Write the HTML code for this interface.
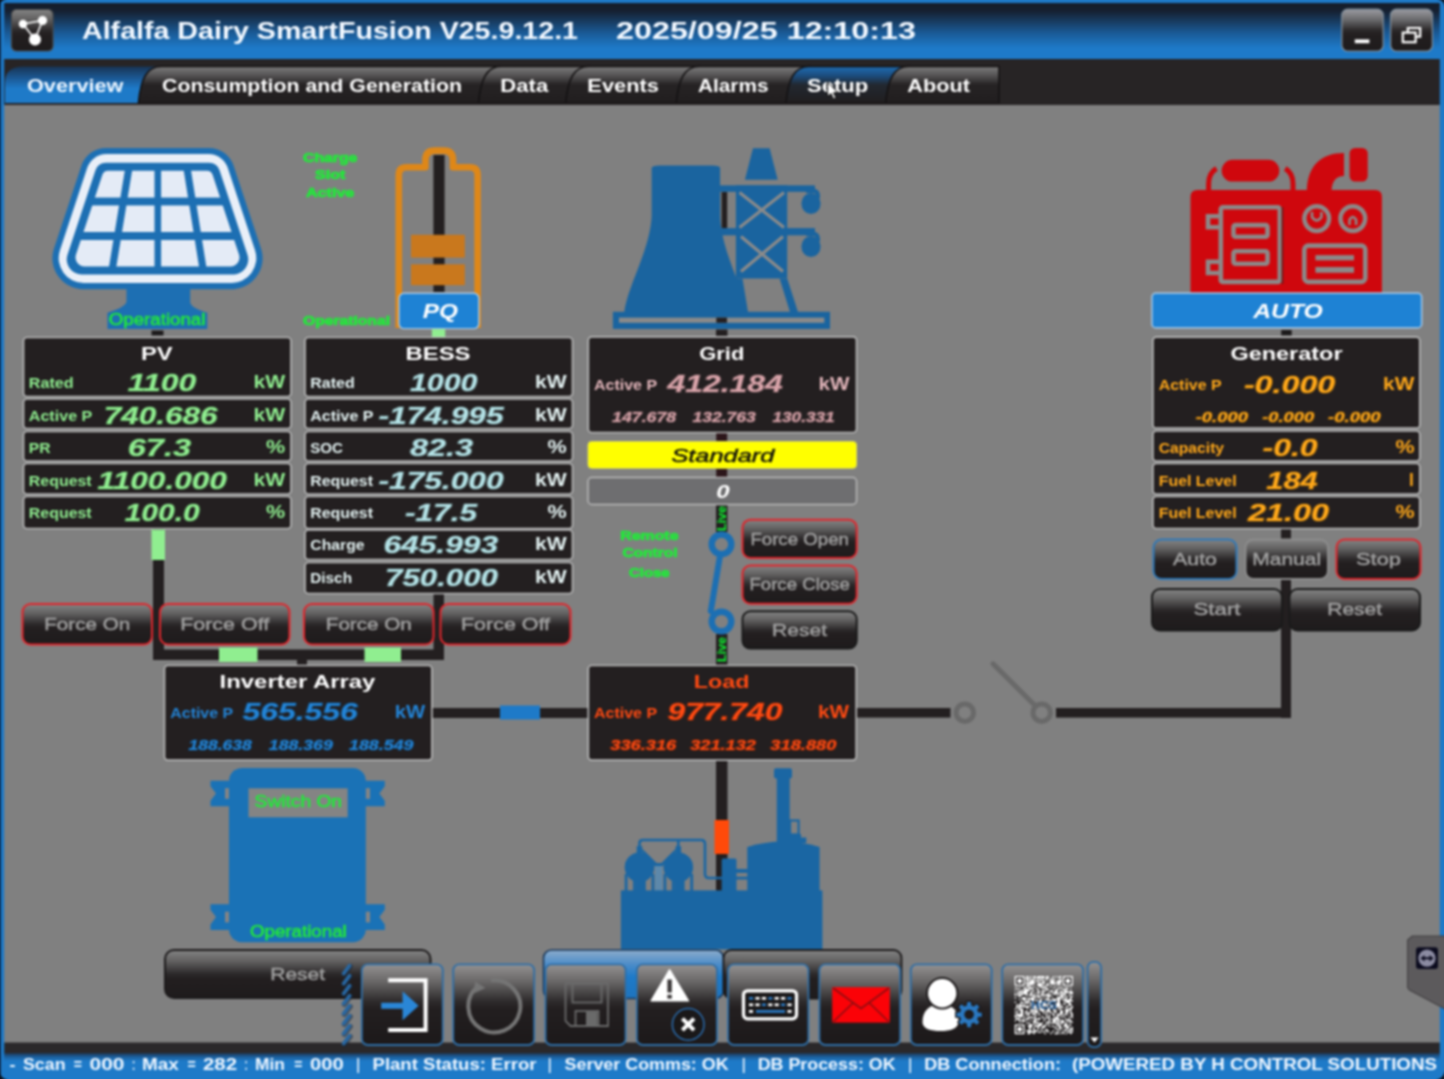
<!DOCTYPE html>
<html><head><meta charset="utf-8"><title>SmartFusion Overview</title>
<style>html,body{margin:0;padding:0;background:#808080;overflow:hidden;width:1444px;height:1079px}svg{display:block;font-family:"Liberation Sans",sans-serif}text{white-space:pre}</style></head>
<body>
<svg width="1444" height="1079" viewBox="0 0 1444 1079">
<defs>
<linearGradient id="titleg" x1="0" y1="0" x2="0" y2="1"><stop offset="0" stop-color="#141c28"/><stop offset="0.18" stop-color="#162030"/><stop offset="0.55" stop-color="#1a5a96"/><stop offset="0.8" stop-color="#1e7ac8"/><stop offset="1" stop-color="#1e7ac8"/></linearGradient>
<linearGradient id="btn" x1="0" y1="0" x2="0" y2="1"><stop offset="0" stop-color="#848484"/><stop offset="0.22" stop-color="#646363"/><stop offset="0.5" stop-color="#2c292a"/><stop offset="0.6" stop-color="#231f20"/><stop offset="1" stop-color="#1e1b1c"/></linearGradient>
<linearGradient id="wbtn" x1="0" y1="0" x2="0" y2="1"><stop offset="0" stop-color="#9c9ca2"/><stop offset="0.25" stop-color="#6a6a6c"/><stop offset="0.5" stop-color="#2c292a"/><stop offset="0.6" stop-color="#231f20"/><stop offset="1" stop-color="#1e1b1c"/></linearGradient>
<linearGradient id="tabg" x1="0" y1="0" x2="0" y2="1"><stop offset="0" stop-color="#7c7c7c"/><stop offset="0.25" stop-color="#545253"/><stop offset="0.5" stop-color="#262324"/><stop offset="1" stop-color="#211e1f"/></linearGradient>
<linearGradient id="tabact" x1="0" y1="0" x2="0" y2="1"><stop offset="0" stop-color="#183454"/><stop offset="0.35" stop-color="#1c5c9a"/><stop offset="0.6" stop-color="#1e7ac8"/><stop offset="1" stop-color="#1e7ac8"/></linearGradient>
<linearGradient id="tabhov" x1="0" y1="0" x2="0" y2="1"><stop offset="0" stop-color="#1f6cb2"/><stop offset="0.25" stop-color="#1c4d7e"/><stop offset="0.5" stop-color="#222830"/><stop offset="1" stop-color="#211e1f"/></linearGradient>
<clipPath id="cellclip"><path d="M96.58,170.76 A10,10 0 0 1 106.08,163.90 L208.92,163.90 A10,10 0 0 1 218.42,170.76 L246.25,254.80 A14,14 0 0 1 232.96,273.20 L82.04,273.20 A14,14 0 0 1 68.75,254.80 Z"/></clipPath>
<linearGradient id="btnblue" x1="0" y1="0" x2="0" y2="1"><stop offset="0" stop-color="#8caccc"/><stop offset="0.3" stop-color="#4c8cc8"/><stop offset="0.55" stop-color="#1e7ac8"/><stop offset="1" stop-color="#1e74be"/></linearGradient>
<linearGradient id="tbtn" x1="0" y1="0" x2="0" y2="1"><stop offset="0" stop-color="#949292"/><stop offset="0.2" stop-color="#6c6a6a"/><stop offset="0.46" stop-color="#2e2b2c"/><stop offset="0.55" stop-color="#231f20"/><stop offset="1" stop-color="#1c191a"/></linearGradient>
<linearGradient id="sbg" x1="0" y1="0" x2="0" y2="1"><stop offset="0" stop-color="#20344c"/><stop offset="0.45" stop-color="#1c5c98"/><stop offset="1" stop-color="#1e7ac8"/></linearGradient>
<filter id="soft" color-interpolation-filters="sRGB" filterUnits="userSpaceOnUse" x="-30" y="-30" width="1504" height="1139"><feGaussianBlur stdDeviation="0.8"/></filter>
</defs>
<g filter="url(#soft)">
<rect x="-20.0" y="-20.0" width="1484.0" height="1119.0" fill="#808080" />
<rect x="-20.0" y="0.0" width="1484.0" height="60.0" fill="url(#titleg)" />
<rect x="-20.0" y="-20.0" width="1484.0" height="23.0" fill="#1e7ac8" />
<rect x="-20.0" y="59.0" width="1484.0" height="45.8" fill="#272425" />
<rect x="11.5" y="9.5" width="41.5" height="41.5" fill="url(#btn)" stroke="#4a4a4a" stroke-width="1.2" rx="5" ry="5" />
<g stroke="#fff" stroke-width="1.6" fill="#fff"><line x1="23" y1="24" x2="42.5" y2="20.5"/><line x1="23" y1="24" x2="35" y2="39.5"/><line x1="42.5" y1="20.5" x2="35" y2="39.5"/><circle cx="23" cy="24" r="3.4"/><circle cx="42.5" cy="20.5" r="3.8"/><circle cx="35" cy="39.5" r="5.2"/></g>
<text x="82.0" y="39.4" font-size="23.18" textLength="496.0" lengthAdjust="spacingAndGlyphs" fill="#f2f8ff" font-weight="bold" >Alfalfa Dairy SmartFusion V25.9.12.1</text>
<text x="616.0" y="39.4" font-size="23.18" textLength="300.0" lengthAdjust="spacingAndGlyphs" fill="#f2f8ff" font-weight="bold" >2025/09/25 12:10:13</text>
<rect x="1341.8" y="9.2" width="41.4" height="42.0" fill="url(#wbtn)" stroke="#7f8d9a" stroke-width="1.3" rx="6" ry="6" />
<rect x="1390.6" y="9.2" width="41.8" height="42.0" fill="url(#wbtn)" stroke="#7f8d9a" stroke-width="1.3" rx="6" ry="6" />
<rect x="1354.8" y="39.4" width="14.6" height="3.8" fill="#fff" />
<g fill="none" stroke="#fff" stroke-width="2.2"><rect x="1402.8" y="32.6" width="12.8" height="9.6"/><path d="M1407.8 32.6 V28 H1420.2 V36.6 H1415.6"/></g>
<path d="M5,103 L5,82 Q5,66.5 24,66.5 L170,66.5 L170,103 Z" fill="url(#tabact)"/>
<path d="M138.4,103 C140.9,79 146.4,66.5 161.4,66.5 L500,66.5 L500,103 Z" fill="url(#tabg)" stroke="#141213" stroke-width="1.6"/>
<path d="M478.4,103 C480.9,79 486.4,66.5 501.4,66.5 L590,66.5 L590,103 Z" fill="url(#tabg)" stroke="#141213" stroke-width="1.6"/>
<path d="M565.6,103 C568.1,79 573.6,66.5 588.6,66.5 L700,66.5 L700,103 Z" fill="url(#tabg)" stroke="#141213" stroke-width="1.6"/>
<path d="M676.2,103 C678.7,79 684.2,66.5 699.2,66.5 L810,66.5 L810,103 Z" fill="url(#tabg)" stroke="#141213" stroke-width="1.6"/>
<path d="M785.9,103 C788.4,79 793.9,66.5 808.9,66.5 L910,66.5 L910,103 Z" fill="url(#tabhov)" stroke="#141213" stroke-width="1.6"/>
<path d="M885.6,103 C888.1,79 893.6,66.5 908.6,66.5 L999,66.5 L999,103 Z" fill="url(#tabg)" stroke="#141213" stroke-width="1.6"/>
<rect x="-20.0" y="103.2" width="1484.0" height="1.6" fill="#272425" />
<text x="27.0" y="91.7" font-size="17.60" textLength="96.4" lengthAdjust="spacingAndGlyphs" fill="#eef6ff" font-weight="bold" >Overview</text>
<text x="162.0" y="91.7" font-size="17.60" textLength="300.0" lengthAdjust="spacingAndGlyphs" fill="#fff" font-weight="bold" >Consumption and Generation</text>
<text x="500.3" y="91.7" font-size="17.60" textLength="47.9" lengthAdjust="spacingAndGlyphs" fill="#fff" font-weight="bold" >Data</text>
<text x="587.3" y="91.7" font-size="17.60" textLength="71.7" lengthAdjust="spacingAndGlyphs" fill="#fff" font-weight="bold" >Events</text>
<text x="698.0" y="91.7" font-size="17.60" textLength="70.5" lengthAdjust="spacingAndGlyphs" fill="#fff" font-weight="bold" >Alarms</text>
<text x="807.0" y="91.7" font-size="17.60" textLength="61.2" lengthAdjust="spacingAndGlyphs" fill="#fff" font-weight="bold" >Setup</text>
<text x="907.3" y="91.7" font-size="17.60" textLength="62.7" lengthAdjust="spacingAndGlyphs" fill="#fff" font-weight="bold" >About</text>
<path d="M827.5,82 L827.5,96.5 L831,93.5 L833.5,99 L836,98 L833.5,92.8 L838,92.5 Z" fill="#fff" stroke="#111" stroke-width="1"/>
<rect x="721.6" y="192.0" width="5.6" height="37.0" fill="#231f20" />
<path d="M753,148.3 L769.6,148.3 L777.7,179.7 L744.9,179.7 Z" fill="#1a649f"/>
<rect x="720.0" y="185.4" width="95.0" height="6.4" fill="#1a649f" />
<rect x="720.0" y="228.1" width="95.0" height="7.2" fill="#1a649f" />
<rect x="735.9" y="185.4" width="51.3" height="93.1" fill="#1a649f" />
<g stroke="#8a8a8a" stroke-width="3.2" stroke-linecap="butt"><line x1="739.5" y1="192.5" x2="784" y2="227.5"/><line x1="784" y1="192.5" x2="739.5" y2="227.5"/><line x1="741" y1="236.5" x2="783" y2="271.5"/><line x1="783" y1="236.5" x2="741" y2="271.5"/></g>
<path d="M779.6,278.5 L787.2,278.5 L798,312 L790,312 Z" fill="#1a649f"/>
<path d="M735.9,278.5 L742.5,278.5 L748,312 L738,312 Z" fill="#1a649f"/>
<path d="M806,191 L815,191 Q818,192 818,196 L818,198" fill="none" stroke="#1a649f" stroke-width="4"/>
<ellipse cx="811" cy="203.5" rx="9.6" ry="10.6" fill="#1a649f"/>
<ellipse cx="811" cy="246.5" rx="9.6" ry="10.6" fill="#1a649f"/>
<path d="M806,234 L815,234 Q818,235 818,239 L818,241" fill="none" stroke="#1a649f" stroke-width="4"/>
<path d="M651.7,168 Q651.7,165.6 660,165.4 L712,165.4 Q720.1,165.6 720.1,168 L720.1,216 C721,250 742,285 747.3,312 L624.3,312 C628,285 650,250 651.7,216 Z" fill="#1a649f"/>
<rect x="612.9" y="311.8" width="217.1" height="17.1" fill="#1a649f" />
<rect x="619.0" y="317.6" width="205.3" height="5.2" fill="#8a8a8a" />
<rect x="716.3" y="317.6" width="10.7" height="5.2" fill="#231f20" />
<rect x="153.0" y="529.0" width="11.0" height="131.0" fill="#231f20" />
<rect x="151.5" y="529.5" width="13.5" height="30.5" fill="#90ee90" />
<rect x="151.5" y="330.5" width="12.0" height="5.0" fill="#1c1a1b" />
<rect x="153.0" y="649.5" width="291.0" height="10.5" fill="#231f20" />
<rect x="219.0" y="647.5" width="38.5" height="14.5" fill="#90ee90" />
<rect x="364.5" y="647.5" width="36.5" height="14.5" fill="#90ee90" />
<rect x="433.5" y="594.0" width="10.5" height="66.0" fill="#231f20" />
<rect x="297.0" y="660.0" width="10.0" height="6.0" fill="#231f20" />
<rect x="432.0" y="708.0" width="156.0" height="10.0" fill="#231f20" />
<rect x="500.0" y="705.5" width="40.0" height="14.0" fill="#1e7ac8" />
<rect x="716.0" y="329.5" width="11.5" height="7.5" fill="#231f20" />
<rect x="716.2" y="432.5" width="11.0" height="9.5" fill="#2c161a" />
<rect x="716.2" y="468.0" width="11.0" height="10.0" fill="#2c161a" />
<rect x="716.0" y="504.0" width="11.5" height="28.0" fill="#231f20" />
<rect x="716.0" y="634.0" width="11.5" height="32.0" fill="#231f20" />
<rect x="716.0" y="760.0" width="11.5" height="132.0" fill="#231f20" />
<rect x="714.5" y="820.0" width="14.5" height="34.0" fill="#ff4a0a" />
<rect x="857.0" y="708.0" width="93.5" height="9.6" fill="#231f20" />
<rect x="1056.0" y="708.0" width="235.0" height="9.6" fill="#231f20" />
<rect x="1281.0" y="529.0" width="10.0" height="189.0" fill="#231f20" />
<rect x="1281.2" y="330.0" width="10.5" height="5.5" fill="#1c1a1b" />
<g fill="none" stroke="#696969" stroke-width="5"><circle cx="964.8" cy="712.7" r="8.7"/><circle cx="1041.7" cy="712.7" r="8.7"/></g>
<line x1="993" y1="663.8" x2="1035" y2="705.5" stroke="#696969" stroke-width="5" stroke-linecap="round"/>
<path d="M81.40,165.73 A26,26 0 0 1 106.08,147.90 L208.92,147.90 A26,26 0 0 1 233.60,165.73 L261.00,248.45 A31,31 0 0 1 231.58,289.20 L83.42,289.20 A31,31 0 0 1 54.00,248.45 Z" fill="#1d6fb3"/>
<path d="M87.24,167.81 A20,20 0 0 1 106.22,154.10 L208.78,154.10 A20,20 0 0 1 227.76,167.81 L255.03,250.14 A25,25 0 0 1 231.30,283.00 L83.70,283.00 A25,25 0 0 1 59.97,250.14 Z" fill="#e9eff8"/>
<path d="M95.49,170.24 A11,11 0 0 1 105.93,162.70 L209.07,162.70 A11,11 0 0 1 219.51,170.24 L247.48,254.68 A15,15 0 0 1 233.24,274.40 L81.76,274.40 A15,15 0 0 1 67.52,254.68 Z" fill="#1d6fb3"/>
<path d="M102.40,174.81 A6,6 0 0 1 108.10,170.70 L206.90,170.70 A6,6 0 0 1 212.60,174.81 L239.01,254.57 A9,9 0 0 1 230.47,266.40 L84.53,266.40 A9,9 0 0 1 75.99,254.57 Z" fill="#e4ebf6"/>
<g stroke="#1d6fb3" fill="none"><line x1="60" y1="201.5" x2="255" y2="201.5" stroke-width="7.6" clip-path="url(#cellclip)"/></g>
<g stroke="#1d6fb3" clip-path="url(#cellclip)"><line x1="60" y1="201.5" x2="255" y2="201.5" stroke-width="7.6"/><line x1="60" y1="236" x2="255" y2="236" stroke-width="8"/><line x1="157.8" y1="160" x2="157.8" y2="280" stroke-width="6.6"/><line x1="130.2" y1="160" x2="110.5" y2="280" stroke-width="7.2"/><line x1="185.7" y1="160" x2="204.8" y2="280" stroke-width="7.2"/></g>
<path d="M126.5,288 L190.2,288 L190.2,302.3 Q191,308 207.3,312.7 L207.3,329 L107.5,329 L107.5,312.7 Q124,308 126.5,302.3 Z" fill="#1d6fb3"/>
<text x="108.8" y="325.1" font-size="15.92" textLength="96.6" lengthAdjust="spacingAndGlyphs" fill="#22e83a" stroke="#22e83a" stroke-width="0.5">Operational</text>
<path d="M398.8,328 L398.8,175 Q398.8,167.2 406.5,167.2 L425.4,167.2 L425.4,160 Q425.4,150.6 434.8,150.6 L443.6,150.6 Q453,150.6 453,160 L453,167.2 L469.8,167.2 Q477.6,167.2 477.6,175 L477.6,328" fill="none" stroke="#de8718" stroke-width="6.6" stroke-linejoin="round"/>
<rect x="433.4" y="155.0" width="11.2" height="137.0" fill="#231f20" />
<rect x="411.0" y="234.8" width="53.8" height="22.8" fill="#c9781d" />
<rect x="411.0" y="264.3" width="53.8" height="20.9" fill="#c9781d" />
<rect x="399.0" y="293.2" width="79.8" height="35.4" fill="#1e82d4" stroke="#a8c8e6" stroke-width="1.4" rx="5" ry="5" />
<text x="422.8" y="317.9" font-size="19.83" textLength="35.2" lengthAdjust="spacingAndGlyphs" fill="#fff" font-style="italic" font-weight="bold" >PQ</text>
<rect x="431.9" y="329.2" width="13.3" height="7.8" fill="#90ee90" />
<text x="303.0" y="161.6" font-size="13.69" textLength="54.4" lengthAdjust="spacingAndGlyphs" fill="#22e83a" font-weight="bold" stroke="#22e83a" stroke-width="0.7">Charge</text>
<text x="315.0" y="179.1" font-size="13.69" textLength="30.4" lengthAdjust="spacingAndGlyphs" fill="#22e83a" font-weight="bold" stroke="#22e83a" stroke-width="0.7">Slot</text>
<text x="306.0" y="196.8" font-size="13.69" textLength="48.3" lengthAdjust="spacingAndGlyphs" fill="#22e83a" font-weight="bold" stroke="#22e83a" stroke-width="0.7">Active</text>
<text x="303.0" y="325.1" font-size="13.69" textLength="87.0" lengthAdjust="spacingAndGlyphs" fill="#22e83a" font-weight="bold" stroke="#22e83a" stroke-width="0.7">Operational</text>
<path d="M1190.5,293 L1190.5,197 Q1190.5,190.1 1197.5,190.1 L1375,190.1 Q1381.9,190.1 1381.9,197 L1381.9,293 Z" fill="#cf070d"/>
<rect x="1221.7" y="159.7" width="57.6" height="21.9" fill="#cf070d" rx="10.9" ry="10.9" />
<path d="M1208.6,192 L1208.6,184 Q1208.6,173 1216.5,168.5" fill="none" stroke="#cf070d" stroke-width="5"/>
<path d="M1293,192 L1293,184 Q1293,173 1285.2,168.5" fill="none" stroke="#cf070d" stroke-width="5"/>
<path d="M1306.9,192 C1306.9,166 1321,153 1344,153 L1344,175.9 C1336,175.9 1331.6,181 1331.6,192 Z" fill="#cf070d"/>
<rect x="1349.6" y="147.9" width="18.1" height="33.7" fill="#cf070d" rx="5.5" ry="5.5" />
<g fill="none" stroke="#8c8888" stroke-width="4.6"><rect x="1220.8" y="207.3" width="59" height="74.6" rx="2"/><rect x="1233.5" y="225.1" width="34" height="11.7" rx="2"/><rect x="1233.5" y="251.3" width="34" height="12.5" rx="2"/><path d="M1220.8,216.2 L1208,216.2 L1208,227.3 L1220.8,227.3"/><path d="M1220.8,261.8 L1208,261.8 L1208,273 L1220.8,273"/></g>
<rect x="1281.5" y="207.0" width="1.8" height="77.0" fill="#6a1c1c" />
<g fill="none" stroke="#8c8888" stroke-width="4.4"><circle cx="1316.7" cy="218.6" r="12.4"/><circle cx="1352.8" cy="218.6" r="12.4"/></g>
<path d="M1312,212 L1312,217 Q1316.7,224 1321.4,217 L1321.4,212" fill="none" stroke="#8c8888" stroke-width="2.6"/>
<path d="M1349.5,225 L1349.5,220 Q1352.8,214 1356.1,220 L1356.1,225" fill="none" stroke="#8c8888" stroke-width="2.6"/>
<rect x="1304.3" y="245.6" width="61" height="36.3" rx="4" fill="none" stroke="#8c8888" stroke-width="4.6"/>
<rect x="1315.4" y="255.1" width="38.6" height="5.3" fill="#8c8888" />
<rect x="1315.4" y="267.0" width="38.6" height="5.8" fill="#8c8888" />
<path d="M231,780.7 L210.5,780.7 L210.5,786.2 L216.0,793.5 L210.5,800.8 L210.5,806.3 L231,806.3 Z" fill="#1a72b6"/>
<rect x="225.0" y="788.2" width="4.8" height="10.6" fill="#848484" />
<path d="M231,904.2 L210.5,904.2 L210.5,909.7 L216.0,917.05 L210.5,924.4 L210.5,929.9 L231,929.9 Z" fill="#1a72b6"/>
<rect x="225.0" y="911.7" width="4.8" height="10.7" fill="#848484" />
<path d="M364,780.7 L384.8,780.7 L384.8,786.2 L379.3,793.5 L384.8,800.8 L384.8,806.3 L364,806.3 Z" fill="#1a72b6"/>
<rect x="365.2" y="788.2" width="4.8" height="10.6" fill="#848484" />
<path d="M364,904.2 L384.8,904.2 L384.8,909.7 L379.3,917.05 L384.8,924.4 L384.8,929.9 L364,929.9 Z" fill="#1a72b6"/>
<rect x="365.2" y="911.7" width="4.8" height="10.7" fill="#848484" />
<rect x="229.0" y="767.9" width="136.8" height="174.3" fill="#1a72b6" rx="13" ry="13" />
<rect x="248.5" y="788.3" width="99.2" height="29.0" fill="#848484" />
<text x="254.6" y="807.3" font-size="16.76" textLength="87.4" lengthAdjust="spacingAndGlyphs" fill="#22e83a" stroke="#22e83a" stroke-width="0.5">Switch On</text>
<text x="249.9" y="937.0" font-size="15.64" textLength="96.9" lengthAdjust="spacingAndGlyphs" fill="#22e83a" stroke="#22e83a" stroke-width="0.5">Operational</text>
<rect x="776.8" y="772.0" width="12.9" height="73.0" fill="#1a66a3" />
<rect x="774.0" y="768.3" width="18.0" height="10.2" fill="#1a66a3" rx="2" ry="2" />
<rect x="790" y="820.5" width="8.6" height="14" fill="none" stroke="#1a66a3" stroke-width="2.2"/>
<path d="M789,833.9 L801,833.9 L801,837.5 L806.3,837.5 L806.3,843 L789,843 Z" fill="#1a66a3"/>
<path d="M747.3,892 L747.3,847 Q783,836 819.6,847 L819.6,892 Z" fill="#1a66a3"/>
<rect x="721.7" y="858.6" width="14.8" height="33.4" fill="#1a66a3" rx="1.5" ry="1.5" />
<rect x="736.0" y="869.0" width="12.0" height="3.9" fill="#1a66a3" />
<rect x="736.0" y="876.7" width="12.0" height="2.8" fill="#1a66a3" />
<circle cx="639.5" cy="867.2" r="14.8" fill="#1a66a3"/>
<rect x="636.7" y="846.2" width="5.6" height="8.8" fill="#1a66a3" />
<rect x="624.7" y="874.0" width="2.8" height="18.0" fill="#1a66a3" />
<rect x="633.0" y="874.0" width="2.8" height="18.0" fill="#1a66a3" />
<rect x="643.0" y="874.0" width="2.8" height="18.0" fill="#1a66a3" />
<rect x="651.5" y="874.0" width="2.8" height="18.0" fill="#1a66a3" />
<rect x="635.5" y="878.0" width="8.0" height="14.0" fill="#1a66a3" />
<circle cx="678.3" cy="867.2" r="14.8" fill="#1a66a3"/>
<rect x="675.5" y="846.2" width="5.6" height="8.8" fill="#1a66a3" />
<rect x="663.5" y="874.0" width="2.8" height="18.0" fill="#1a66a3" />
<rect x="671.8" y="874.0" width="2.8" height="18.0" fill="#1a66a3" />
<rect x="681.8" y="874.0" width="2.8" height="18.0" fill="#1a66a3" />
<rect x="690.3" y="874.0" width="2.8" height="18.0" fill="#1a66a3" />
<rect x="674.3" y="878.0" width="8.0" height="14.0" fill="#1a66a3" />
<rect x="655.0" y="864.3" width="7.4" height="27.7" fill="#5d88aa" />
<rect x="654.0" y="863.0" width="9.5" height="3.0" fill="#1a66a3" />
<path d="M639.5,848 L639.5,843 Q639.5,840 643,840 L701,840 Q705,840 705,844 L705,874 Q705,878 709,878 L722,878" fill="none" stroke="#1a66a3" stroke-width="2.6"/>
<path d="M678.3,848 L678.3,840" fill="none" stroke="#1a66a3" stroke-width="2.6"/>
<path d="M642,850 L656,864 M676,850 L662,864" fill="none" stroke="#1a66a3" stroke-width="2.2"/>
<rect x="620.9" y="890.4" width="201.5" height="58.9" fill="#1a66a3" />
<rect x="23.5" y="337.5" width="267.5" height="59.0" fill="#231f20" stroke="#b6b6b6" stroke-width="1.7" rx="3.5" ry="3.5" />
<rect x="23.5" y="399.0" width="267.5" height="29.5" fill="#231f20" stroke="#b6b6b6" stroke-width="1.7" rx="3.5" ry="3.5" />
<rect x="23.5" y="431.5" width="267.5" height="29.5" fill="#231f20" stroke="#b6b6b6" stroke-width="1.7" rx="3.5" ry="3.5" />
<rect x="23.5" y="463.5" width="267.5" height="30.5" fill="#231f20" stroke="#b6b6b6" stroke-width="1.7" rx="3.5" ry="3.5" />
<rect x="23.5" y="496.5" width="267.5" height="32.0" fill="#231f20" stroke="#b6b6b6" stroke-width="1.7" rx="3.5" ry="3.5" />
<text x="141.0" y="359.6" font-size="18.99" textLength="31.6" lengthAdjust="spacingAndGlyphs" fill="#fff" font-weight="bold" >PV</text>
<text x="28.8" y="388.2" font-size="14.25" textLength="44.8" lengthAdjust="spacingAndGlyphs" fill="#90ee90" font-weight="bold" >Rated</text>
<text x="127.8" y="390.9" font-size="24.02" textLength="68.4" lengthAdjust="spacingAndGlyphs" fill="#90ee90" font-style="italic" font-weight="bold" stroke="#487748" stroke-width="1.6" stroke-opacity="0.55" paint-order="stroke" stroke-linejoin="round">1100</text>
<text x="253.5" y="388.2" font-size="17.88" textLength="31.7" lengthAdjust="spacingAndGlyphs" fill="#90ee90" font-weight="bold" >kW</text>
<text x="28.8" y="420.9" font-size="14.25" textLength="63.5" lengthAdjust="spacingAndGlyphs" fill="#90ee90" font-weight="bold" >Active P</text>
<text x="103.8" y="423.6" font-size="24.02" textLength="113.6" lengthAdjust="spacingAndGlyphs" fill="#90ee90" font-style="italic" font-weight="bold" stroke="#487748" stroke-width="1.6" stroke-opacity="0.55" paint-order="stroke" stroke-linejoin="round">740.686</text>
<text x="253.5" y="420.9" font-size="17.88" textLength="31.7" lengthAdjust="spacingAndGlyphs" fill="#90ee90" font-weight="bold" >kW</text>
<text x="28.8" y="453.2" font-size="14.25" textLength="21.8" lengthAdjust="spacingAndGlyphs" fill="#90ee90" font-weight="bold" >PR</text>
<text x="127.8" y="455.9" font-size="24.02" textLength="63.2" lengthAdjust="spacingAndGlyphs" fill="#90ee90" font-style="italic" font-weight="bold" stroke="#487748" stroke-width="1.6" stroke-opacity="0.55" paint-order="stroke" stroke-linejoin="round">67.3</text>
<text x="266.0" y="453.2" font-size="17.88" textLength="19.2" lengthAdjust="spacingAndGlyphs" fill="#90ee90" font-weight="bold" >%</text>
<text x="28.8" y="485.9" font-size="14.25" textLength="62.9" lengthAdjust="spacingAndGlyphs" fill="#90ee90" font-weight="bold" >Request</text>
<text x="97.6" y="488.6" font-size="24.02" textLength="129.2" lengthAdjust="spacingAndGlyphs" fill="#90ee90" font-style="italic" font-weight="bold" stroke="#487748" stroke-width="1.6" stroke-opacity="0.55" paint-order="stroke" stroke-linejoin="round">1100.000</text>
<text x="253.5" y="485.9" font-size="17.88" textLength="31.7" lengthAdjust="spacingAndGlyphs" fill="#90ee90" font-weight="bold" >kW</text>
<text x="28.8" y="518.0" font-size="14.25" textLength="62.9" lengthAdjust="spacingAndGlyphs" fill="#90ee90" font-weight="bold" >Request</text>
<text x="124.7" y="520.7" font-size="24.02" textLength="75.0" lengthAdjust="spacingAndGlyphs" fill="#90ee90" font-style="italic" font-weight="bold" stroke="#487748" stroke-width="1.6" stroke-opacity="0.55" paint-order="stroke" stroke-linejoin="round">100.0</text>
<text x="266.0" y="518.0" font-size="17.88" textLength="19.2" lengthAdjust="spacingAndGlyphs" fill="#90ee90" font-weight="bold" >%</text>
<rect x="305.0" y="337.5" width="267.5" height="59.0" fill="#231f20" stroke="#b6b6b6" stroke-width="1.7" rx="3.5" ry="3.5" />
<rect x="305.0" y="399.0" width="267.5" height="29.5" fill="#231f20" stroke="#b6b6b6" stroke-width="1.7" rx="3.5" ry="3.5" />
<rect x="305.0" y="431.5" width="267.5" height="29.5" fill="#231f20" stroke="#b6b6b6" stroke-width="1.7" rx="3.5" ry="3.5" />
<rect x="305.0" y="463.5" width="267.5" height="30.5" fill="#231f20" stroke="#b6b6b6" stroke-width="1.7" rx="3.5" ry="3.5" />
<rect x="305.0" y="496.5" width="267.5" height="32.0" fill="#231f20" stroke="#b6b6b6" stroke-width="1.7" rx="3.5" ry="3.5" />
<rect x="305.0" y="530.0" width="267.5" height="29.5" fill="#231f20" stroke="#b6b6b6" stroke-width="1.7" rx="3.5" ry="3.5" />
<rect x="305.0" y="562.5" width="267.5" height="31.0" fill="#231f20" stroke="#b6b6b6" stroke-width="1.7" rx="3.5" ry="3.5" />
<text x="405.5" y="359.6" font-size="18.99" textLength="65.0" lengthAdjust="spacingAndGlyphs" fill="#fff" font-weight="bold" >BESS</text>
<text x="310.3" y="388.2" font-size="14.25" textLength="44.5" lengthAdjust="spacingAndGlyphs" fill="#e4f2f2" font-weight="bold" >Rated</text>
<text x="410.0" y="390.9" font-size="24.02" textLength="67.5" lengthAdjust="spacingAndGlyphs" fill="#b4e2e6" font-style="italic" font-weight="bold" stroke="#5a7173" stroke-width="1.6" stroke-opacity="0.55" paint-order="stroke" stroke-linejoin="round">1000</text>
<text x="535.0" y="388.2" font-size="17.88" textLength="31.7" lengthAdjust="spacingAndGlyphs" fill="#e4f2f2" font-weight="bold" >kW</text>
<text x="310.3" y="420.9" font-size="14.25" textLength="63.2" lengthAdjust="spacingAndGlyphs" fill="#e4f2f2" font-weight="bold" >Active P</text>
<text x="378.5" y="423.6" font-size="24.02" textLength="125.0" lengthAdjust="spacingAndGlyphs" fill="#b4e2e6" font-style="italic" font-weight="bold" stroke="#5a7173" stroke-width="1.6" stroke-opacity="0.55" paint-order="stroke" stroke-linejoin="round">-174.995</text>
<text x="535.0" y="420.9" font-size="17.88" textLength="31.7" lengthAdjust="spacingAndGlyphs" fill="#e4f2f2" font-weight="bold" >kW</text>
<text x="310.3" y="453.2" font-size="14.25" textLength="32.7" lengthAdjust="spacingAndGlyphs" fill="#e4f2f2" font-weight="bold" >SOC</text>
<text x="410.0" y="455.9" font-size="24.02" textLength="63.0" lengthAdjust="spacingAndGlyphs" fill="#b4e2e6" font-style="italic" font-weight="bold" stroke="#5a7173" stroke-width="1.6" stroke-opacity="0.55" paint-order="stroke" stroke-linejoin="round">82.3</text>
<text x="547.5" y="453.2" font-size="17.88" textLength="19.2" lengthAdjust="spacingAndGlyphs" fill="#e4f2f2" font-weight="bold" >%</text>
<text x="310.3" y="485.9" font-size="14.25" textLength="62.7" lengthAdjust="spacingAndGlyphs" fill="#e4f2f2" font-weight="bold" >Request</text>
<text x="378.5" y="488.6" font-size="24.02" textLength="125.0" lengthAdjust="spacingAndGlyphs" fill="#b4e2e6" font-style="italic" font-weight="bold" stroke="#5a7173" stroke-width="1.6" stroke-opacity="0.55" paint-order="stroke" stroke-linejoin="round">-175.000</text>
<text x="535.0" y="485.9" font-size="17.88" textLength="31.7" lengthAdjust="spacingAndGlyphs" fill="#e4f2f2" font-weight="bold" >kW</text>
<text x="310.3" y="518.0" font-size="14.25" textLength="62.7" lengthAdjust="spacingAndGlyphs" fill="#e4f2f2" font-weight="bold" >Request</text>
<text x="405.0" y="520.7" font-size="24.02" textLength="72.0" lengthAdjust="spacingAndGlyphs" fill="#b4e2e6" font-style="italic" font-weight="bold" stroke="#5a7173" stroke-width="1.6" stroke-opacity="0.55" paint-order="stroke" stroke-linejoin="round">-17.5</text>
<text x="547.5" y="518.0" font-size="17.88" textLength="19.2" lengthAdjust="spacingAndGlyphs" fill="#e4f2f2" font-weight="bold" >%</text>
<text x="310.3" y="550.3" font-size="14.25" textLength="54.2" lengthAdjust="spacingAndGlyphs" fill="#e4f2f2" font-weight="bold" >Charge</text>
<text x="383.5" y="553.0" font-size="24.02" textLength="114.5" lengthAdjust="spacingAndGlyphs" fill="#b4e2e6" font-style="italic" font-weight="bold" stroke="#5a7173" stroke-width="1.6" stroke-opacity="0.55" paint-order="stroke" stroke-linejoin="round">645.993</text>
<text x="535.0" y="550.3" font-size="17.88" textLength="31.7" lengthAdjust="spacingAndGlyphs" fill="#e4f2f2" font-weight="bold" >kW</text>
<text x="310.3" y="582.8" font-size="14.25" textLength="41.7" lengthAdjust="spacingAndGlyphs" fill="#e4f2f2" font-weight="bold" >Disch</text>
<text x="385.0" y="585.5" font-size="24.02" textLength="113.0" lengthAdjust="spacingAndGlyphs" fill="#b4e2e6" font-style="italic" font-weight="bold" stroke="#5a7173" stroke-width="1.6" stroke-opacity="0.55" paint-order="stroke" stroke-linejoin="round">750.000</text>
<text x="535.0" y="582.8" font-size="17.88" textLength="31.7" lengthAdjust="spacingAndGlyphs" fill="#e4f2f2" font-weight="bold" >kW</text>
<rect x="588.3" y="336.9" width="268.2" height="95.6" fill="#231f20" stroke="#b6b6b6" stroke-width="1.7" rx="3.5" ry="3.5" />
<text x="699.2" y="359.5" font-size="19.27" textLength="45.1" lengthAdjust="spacingAndGlyphs" fill="#fff" font-weight="bold" >Grid</text>
<text x="594.1" y="389.7" font-size="14.25" textLength="63.0" lengthAdjust="spacingAndGlyphs" fill="#e2b6bb" font-weight="bold" >Active P</text>
<text x="667.5" y="392.4" font-size="24.02" textLength="115.3" lengthAdjust="spacingAndGlyphs" fill="#d9a4aa" font-style="italic" font-weight="bold" stroke="#6c5255" stroke-width="1.6" stroke-opacity="0.55" paint-order="stroke" stroke-linejoin="round">412.184</text>
<text x="818.4" y="389.7" font-size="17.88" textLength="31.0" lengthAdjust="spacingAndGlyphs" fill="#e2b6bb" font-weight="bold" >kW</text>
<text x="612.0" y="422.1" font-size="13.97" textLength="64.2" lengthAdjust="spacingAndGlyphs" fill="#d9a4aa" font-style="italic" font-weight="bold" stroke="#6c5255" stroke-width="1.6" stroke-opacity="0.55" paint-order="stroke" stroke-linejoin="round">147.678</text>
<text x="692.4" y="422.1" font-size="13.97" textLength="63.4" lengthAdjust="spacingAndGlyphs" fill="#d9a4aa" font-style="italic" font-weight="bold" stroke="#6c5255" stroke-width="1.6" stroke-opacity="0.55" paint-order="stroke" stroke-linejoin="round">132.763</text>
<text x="772.4" y="422.1" font-size="13.97" textLength="62.3" lengthAdjust="spacingAndGlyphs" fill="#d9a4aa" font-style="italic" font-weight="bold" stroke="#6c5255" stroke-width="1.6" stroke-opacity="0.55" paint-order="stroke" stroke-linejoin="round">130.331</text>
<rect x="588.0" y="441.5" width="268.5" height="26.8" fill="#ffff00" stroke="#d8d860" stroke-width="1" rx="3.5" ry="3.5" />
<text x="671.4" y="461.7" font-size="18.99" textLength="103.0" lengthAdjust="spacingAndGlyphs" fill="#15150a" font-style="italic" stroke="#15150a" stroke-width="0.5">Standard</text>
<rect x="588.0" y="477.5" width="268.5" height="27.0" fill="#6e6e70" stroke="#b8b8b8" stroke-width="1.5" rx="4" ry="4" />
<text x="716.2" y="497.9" font-size="17.74" textLength="13.4" lengthAdjust="spacingAndGlyphs" fill="#fff" font-style="italic" font-weight="bold" >0</text>
<text transform="translate(726.4,531) rotate(-90)" font-size="12.4" font-weight="bold" fill="#10f030" textLength="25" lengthAdjust="spacingAndGlyphs">Live</text>
<text transform="translate(726.4,662) rotate(-90)" font-size="12.4" font-weight="bold" fill="#10f030" textLength="25" lengthAdjust="spacingAndGlyphs">Live</text>
<g fill="none" stroke="#1c6fb3" stroke-width="6.4"><circle cx="721.5" cy="544.3" r="9.8"/><circle cx="721.5" cy="621.5" r="9.8"/></g>
<line x1="719.8" y1="557" x2="710.8" y2="611" stroke="#1c6fb3" stroke-width="6" stroke-linecap="round"/>
<text x="620.2" y="540.2" font-size="13.41" textLength="58.3" lengthAdjust="spacingAndGlyphs" fill="#22e83a" font-weight="bold" stroke="#22e83a" stroke-width="0.7">Remote</text>
<text x="622.4" y="557.0" font-size="13.41" textLength="55.2" lengthAdjust="spacingAndGlyphs" fill="#22e83a" font-weight="bold" stroke="#22e83a" stroke-width="0.7">Control</text>
<text x="629.0" y="576.7" font-size="13.41" textLength="40.6" lengthAdjust="spacingAndGlyphs" fill="#22e83a" font-weight="bold" stroke="#22e83a" stroke-width="0.7">Close</text>
<rect x="742.5" y="519.7" width="114.2" height="38.3" fill="url(#btn)" stroke="#e0262c" stroke-width="2" rx="8" ry="8" />
<text x="750.4" y="544.5" font-size="17.18" textLength="98.5" lengthAdjust="spacingAndGlyphs" fill="#a2a2a2" stroke="#a2a2a2" stroke-width="0.45">Force Open</text>
<rect x="742.5" y="565.5" width="114.2" height="38.2" fill="url(#btn)" stroke="#e0262c" stroke-width="2" rx="8" ry="8" />
<text x="749.4" y="590.2" font-size="17.18" textLength="100.5" lengthAdjust="spacingAndGlyphs" fill="#a2a2a2" stroke="#a2a2a2" stroke-width="0.45">Force Close</text>
<rect x="742.5" y="611.3" width="114.2" height="37.3" fill="url(#btn)" stroke="#1a1a1a" stroke-width="2" rx="8" ry="8" />
<text x="772.1" y="635.6" font-size="17.18" textLength="55.0" lengthAdjust="spacingAndGlyphs" fill="#a2a2a2" stroke="#a2a2a2" stroke-width="0.45">Reset</text>
<rect x="588.3" y="665.5" width="267.9" height="94.6" fill="#231f20" stroke="#b6b6b6" stroke-width="1.7" rx="3.5" ry="3.5" />
<text x="693.8" y="688.1" font-size="19.27" textLength="55.7" lengthAdjust="spacingAndGlyphs" fill="#ff4a12" font-weight="bold" >Load</text>
<text x="594.1" y="717.7" font-size="14.25" textLength="63.0" lengthAdjust="spacingAndGlyphs" fill="#ff4a12" font-weight="bold" >Active P</text>
<text x="667.5" y="720.4" font-size="24.02" textLength="114.9" lengthAdjust="spacingAndGlyphs" fill="#ff4a12" font-style="italic" font-weight="bold" stroke="#7f2509" stroke-width="1.6" stroke-opacity="0.55" paint-order="stroke" stroke-linejoin="round">977.740</text>
<text x="818.1" y="717.7" font-size="17.88" textLength="31.0" lengthAdjust="spacingAndGlyphs" fill="#ff4a12" font-weight="bold" >kW</text>
<text x="610.3" y="750.1" font-size="13.97" textLength="65.9" lengthAdjust="spacingAndGlyphs" fill="#ff4a12" font-style="italic" font-weight="bold" stroke="#7f2509" stroke-width="1.6" stroke-opacity="0.55" paint-order="stroke" stroke-linejoin="round">336.316</text>
<text x="690.3" y="750.1" font-size="13.97" textLength="65.5" lengthAdjust="spacingAndGlyphs" fill="#ff4a12" font-style="italic" font-weight="bold" stroke="#7f2509" stroke-width="1.6" stroke-opacity="0.55" paint-order="stroke" stroke-linejoin="round">321.132</text>
<text x="770.3" y="750.1" font-size="13.97" textLength="66.1" lengthAdjust="spacingAndGlyphs" fill="#ff4a12" font-style="italic" font-weight="bold" stroke="#7f2509" stroke-width="1.6" stroke-opacity="0.55" paint-order="stroke" stroke-linejoin="round">318.880</text>
<rect x="164.5" y="665.5" width="267.4" height="94.6" fill="#231f20" stroke="#b6b6b6" stroke-width="1.7" rx="3.5" ry="3.5" />
<text x="219.6" y="688.1" font-size="19.27" textLength="155.8" lengthAdjust="spacingAndGlyphs" fill="#fff" font-weight="bold" >Inverter Array</text>
<text x="170.3" y="717.7" font-size="14.25" textLength="62.8" lengthAdjust="spacingAndGlyphs" fill="#2384d6" font-weight="bold" >Active P</text>
<text x="242.5" y="720.4" font-size="24.02" textLength="115.3" lengthAdjust="spacingAndGlyphs" fill="#2384d6" font-style="italic" font-weight="bold" stroke="#11426b" stroke-width="1.6" stroke-opacity="0.55" paint-order="stroke" stroke-linejoin="round">565.556</text>
<text x="394.8" y="717.7" font-size="17.88" textLength="30.5" lengthAdjust="spacingAndGlyphs" fill="#2384d6" font-weight="bold" >kW</text>
<text x="188.4" y="750.1" font-size="13.97" textLength="63.4" lengthAdjust="spacingAndGlyphs" fill="#2384d6" font-style="italic" font-weight="bold" stroke="#11426b" stroke-width="1.6" stroke-opacity="0.55" paint-order="stroke" stroke-linejoin="round">188.638</text>
<text x="268.8" y="750.1" font-size="13.97" textLength="64.0" lengthAdjust="spacingAndGlyphs" fill="#2384d6" font-style="italic" font-weight="bold" stroke="#11426b" stroke-width="1.6" stroke-opacity="0.55" paint-order="stroke" stroke-linejoin="round">188.369</text>
<text x="349.0" y="750.1" font-size="13.97" textLength="64.4" lengthAdjust="spacingAndGlyphs" fill="#2384d6" font-style="italic" font-weight="bold" stroke="#11426b" stroke-width="1.6" stroke-opacity="0.55" paint-order="stroke" stroke-linejoin="round">188.549</text>
<rect x="1151.9" y="293.2" width="269.8" height="34.7" fill="#1e82d4" stroke="#9cc0e0" stroke-width="1.7" rx="4" ry="4" />
<text x="1253.2" y="317.8" font-size="20.11" textLength="69.6" lengthAdjust="spacingAndGlyphs" fill="#fff" font-style="italic" font-weight="bold" >AUTO</text>
<rect x="1152.9" y="337.1" width="266.9" height="91.1" fill="#231f20" stroke="#b6b6b6" stroke-width="1.7" rx="3.5" ry="3.5" />
<text x="1230.4" y="359.7" font-size="19.27" textLength="112.2" lengthAdjust="spacingAndGlyphs" fill="#fff" font-weight="bold" >Generator</text>
<text x="1158.7" y="389.9" font-size="14.25" textLength="63.0" lengthAdjust="spacingAndGlyphs" fill="#ffa81a" font-weight="bold" >Active P</text>
<text x="1243.9" y="392.6" font-size="24.02" textLength="91.4" lengthAdjust="spacingAndGlyphs" fill="#ffa81a" font-style="italic" font-weight="bold" stroke="#7f540d" stroke-width="1.6" stroke-opacity="0.55" paint-order="stroke" stroke-linejoin="round">-0.000</text>
<text x="1383.1" y="389.9" font-size="17.88" textLength="31.2" lengthAdjust="spacingAndGlyphs" fill="#ffa81a" font-weight="bold" >kW</text>
<text x="1195.7" y="422.3" font-size="13.97" textLength="52.3" lengthAdjust="spacingAndGlyphs" fill="#ffa81a" font-style="italic" font-weight="bold" stroke="#7f540d" stroke-width="1.6" stroke-opacity="0.55" paint-order="stroke" stroke-linejoin="round">-0.000</text>
<text x="1262.2" y="422.3" font-size="13.97" textLength="51.9" lengthAdjust="spacingAndGlyphs" fill="#ffa81a" font-style="italic" font-weight="bold" stroke="#7f540d" stroke-width="1.6" stroke-opacity="0.55" paint-order="stroke" stroke-linejoin="round">-0.000</text>
<text x="1328.0" y="422.3" font-size="13.97" textLength="52.6" lengthAdjust="spacingAndGlyphs" fill="#ffa81a" font-style="italic" font-weight="bold" stroke="#7f540d" stroke-width="1.6" stroke-opacity="0.55" paint-order="stroke" stroke-linejoin="round">-0.000</text>
<rect x="1152.9" y="431.0" width="266.9" height="30.0" fill="#231f20" stroke="#b6b6b6" stroke-width="1.7" rx="3.5" ry="3.5" />
<rect x="1152.9" y="463.5" width="266.9" height="30.5" fill="#231f20" stroke="#b6b6b6" stroke-width="1.7" rx="3.5" ry="3.5" />
<rect x="1152.9" y="496.5" width="266.9" height="32.0" fill="#231f20" stroke="#b6b6b6" stroke-width="1.7" rx="3.5" ry="3.5" />
<text x="1158.7" y="453.2" font-size="14.25" textLength="65.4" lengthAdjust="spacingAndGlyphs" fill="#ffa81a" font-weight="bold" >Capacity</text>
<text x="1262.6" y="455.8" font-size="24.02" textLength="55.0" lengthAdjust="spacingAndGlyphs" fill="#ffa81a" font-style="italic" font-weight="bold" stroke="#7f540d" stroke-width="1.6" stroke-opacity="0.55" paint-order="stroke" stroke-linejoin="round">-0.0</text>
<text x="1395.6" y="453.2" font-size="17.88" textLength="19.1" lengthAdjust="spacingAndGlyphs" fill="#ffa81a" font-weight="bold" >%</text>
<text x="1158.7" y="485.6" font-size="14.25" textLength="77.9" lengthAdjust="spacingAndGlyphs" fill="#ffa81a" font-weight="bold" >Fuel Level</text>
<text x="1266.3" y="488.6" font-size="24.02" textLength="51.3" lengthAdjust="spacingAndGlyphs" fill="#ffa81a" font-style="italic" font-weight="bold" stroke="#7f540d" stroke-width="1.6" stroke-opacity="0.55" paint-order="stroke" stroke-linejoin="round">184</text>
<text x="1409.0" y="485.6" font-size="17.88" textLength="4.8" lengthAdjust="spacingAndGlyphs" fill="#ffa81a" font-weight="bold" >l</text>
<text x="1158.7" y="517.9" font-size="14.25" textLength="77.9" lengthAdjust="spacingAndGlyphs" fill="#ffa81a" font-weight="bold" >Fuel Level</text>
<text x="1248.0" y="521.0" font-size="24.02" textLength="81.0" lengthAdjust="spacingAndGlyphs" fill="#ffa81a" font-style="italic" font-weight="bold" stroke="#7f540d" stroke-width="1.6" stroke-opacity="0.55" paint-order="stroke" stroke-linejoin="round">21.00</text>
<text x="1395.6" y="517.9" font-size="17.88" textLength="19.1" lengthAdjust="spacingAndGlyphs" fill="#ffa81a" font-weight="bold" >%</text>
<rect x="1153.5" y="539.5" width="83.0" height="39.5" fill="url(#btn)" stroke="#2e78b8" stroke-width="2" rx="8" ry="8" />
<text x="1173.0" y="564.9" font-size="17.18" textLength="44.0" lengthAdjust="spacingAndGlyphs" fill="#a2a2a2" stroke="#a2a2a2" stroke-width="0.45">Auto</text>
<rect x="1245.5" y="539.5" width="82.5" height="39.5" fill="url(#btn)" stroke="#8c8c8c" stroke-width="2" rx="8" ry="8" />
<text x="1252.2" y="564.9" font-size="17.18" textLength="69.0" lengthAdjust="spacingAndGlyphs" fill="#a2a2a2" stroke="#a2a2a2" stroke-width="0.45">Manual</text>
<rect x="1336.5" y="539.5" width="84.0" height="39.5" fill="url(#btn)" stroke="#e0262c" stroke-width="2" rx="8" ry="8" />
<text x="1356.0" y="564.9" font-size="17.18" textLength="45.0" lengthAdjust="spacingAndGlyphs" fill="#a2a2a2" stroke="#a2a2a2" stroke-width="0.45">Stop</text>
<rect x="1152.0" y="589.0" width="130.0" height="41.5" fill="url(#btn)" stroke="#1a1a1a" stroke-width="2" rx="8" ry="8" />
<text x="1193.5" y="615.4" font-size="17.18" textLength="47.0" lengthAdjust="spacingAndGlyphs" fill="#a2a2a2" stroke="#a2a2a2" stroke-width="0.45">Start</text>
<rect x="1289.5" y="589.0" width="130.5" height="41.5" fill="url(#btn)" stroke="#1a1a1a" stroke-width="2" rx="8" ry="8" />
<text x="1327.2" y="615.4" font-size="17.18" textLength="55.0" lengthAdjust="spacingAndGlyphs" fill="#a2a2a2" stroke="#a2a2a2" stroke-width="0.45">Reset</text>
<rect x="22.5" y="604.0" width="129.5" height="40.5" fill="url(#btn)" stroke="#e0262c" stroke-width="2" rx="8" ry="8" />
<text x="44.2" y="629.9" font-size="17.18" textLength="86.0" lengthAdjust="spacingAndGlyphs" fill="#a2a2a2" stroke="#a2a2a2" stroke-width="0.45">Force On</text>
<rect x="160.0" y="604.0" width="129.5" height="40.5" fill="url(#btn)" stroke="#e0262c" stroke-width="2" rx="8" ry="8" />
<text x="180.2" y="629.9" font-size="17.18" textLength="89.0" lengthAdjust="spacingAndGlyphs" fill="#a2a2a2" stroke="#a2a2a2" stroke-width="0.45">Force Off</text>
<rect x="304.0" y="604.0" width="129.5" height="40.5" fill="url(#btn)" stroke="#e0262c" stroke-width="2" rx="8" ry="8" />
<text x="325.8" y="629.9" font-size="17.18" textLength="86.0" lengthAdjust="spacingAndGlyphs" fill="#a2a2a2" stroke="#a2a2a2" stroke-width="0.45">Force On</text>
<rect x="440.5" y="604.0" width="130.0" height="40.5" fill="url(#btn)" stroke="#e0262c" stroke-width="2" rx="8" ry="8" />
<text x="461.0" y="629.9" font-size="17.18" textLength="89.0" lengthAdjust="spacingAndGlyphs" fill="#a2a2a2" stroke="#a2a2a2" stroke-width="0.45">Force Off</text>
<rect x="165.0" y="950.0" width="265.5" height="48.0" fill="url(#btn)" stroke="#1c1a1b" stroke-width="2" rx="9" ry="9" />
<text x="270.2" y="979.6" font-size="17.18" textLength="55.0" lengthAdjust="spacingAndGlyphs" fill="#a2a2a2" stroke="#a2a2a2" stroke-width="0.45">Reset</text>
<rect x="543.5" y="950.0" width="180.0" height="48.5" fill="url(#btnblue)" stroke="#1b3a5c" stroke-width="1.6" rx="8" ry="8" />
<rect x="723.5" y="950.0" width="178.0" height="48.5" fill="url(#btn)" stroke="#1c1a1b" stroke-width="1.8" rx="8" ry="8" />
<rect x="-20.0" y="1042.5" width="1484.0" height="11.0" fill="#2a282a" />
<path d="M343.6,973.6 L349.6,965.6 M343.6,983.6 L349.6,975.6 M343.6,993.6 L349.6,985.6 M343.6,1003.6 L349.6,995.6 M343.6,1013.6 L349.6,1005.6 M343.6,1023.6 L349.6,1015.6 M343.6,1033.6 L349.6,1025.6 M343.6,1043.6 L349.6,1035.6 " stroke="#16283c" stroke-width="5" fill="none" transform="translate(0.8,1)" stroke-linecap="round" opacity="0.55"/>
<path d="M343.6,973.6 L349.6,965.6 M343.6,983.6 L349.6,975.6 M343.6,993.6 L349.6,985.6 M343.6,1003.6 L349.6,995.6 M343.6,1013.6 L349.6,1005.6 M343.6,1023.6 L349.6,1015.6 M343.6,1033.6 L349.6,1025.6 M343.6,1043.6 L349.6,1035.6 " stroke="#2867a2" stroke-width="3.6" fill="none" stroke-linecap="round"/>
<rect x="361.8" y="964.3" width="81.0" height="80.7" fill="url(#tbtn)" stroke="#2f6ea6" stroke-width="1.8" rx="6" ry="6" />
<rect x="453.2" y="964.3" width="81.0" height="80.7" fill="url(#tbtn)" stroke="#2f6ea6" stroke-width="1.8" rx="6" ry="6" />
<rect x="545.5" y="964.3" width="80.1" height="80.7" fill="url(#tbtn)" stroke="#2f6ea6" stroke-width="1.8" rx="6" ry="6" />
<rect x="636.8" y="964.3" width="80.2" height="80.7" fill="url(#tbtn)" stroke="#2f6ea6" stroke-width="1.8" rx="6" ry="6" />
<rect x="728.0" y="964.3" width="80.4" height="80.7" fill="url(#tbtn)" stroke="#2f6ea6" stroke-width="1.8" rx="6" ry="6" />
<rect x="819.4" y="964.3" width="80.8" height="80.7" fill="url(#tbtn)" stroke="#2f6ea6" stroke-width="1.8" rx="6" ry="6" />
<rect x="910.8" y="964.3" width="80.9" height="80.7" fill="url(#tbtn)" stroke="#2f6ea6" stroke-width="1.8" rx="6" ry="6" />
<rect x="1002.2" y="964.3" width="81.0" height="80.7" fill="url(#tbtn)" stroke="#2f6ea6" stroke-width="1.8" rx="6" ry="6" />
<rect x="1087.5" y="961.8" width="13.7" height="85.4" fill="url(#tbtn)" stroke="#2f6ea6" stroke-width="1.8" rx="6" ry="6" />
<path d="M1090.5,1037.5 L1098.5,1037.5 L1094.5,1042.5 Z" fill="#fff"/>
<path d="M388.2,980.2 L425.6,980.2 L425.6,1030 L388.2,1030" fill="none" stroke="#fff" stroke-width="4"/>
<path d="M381.2,1002.7 L402.6,1002.7 L402.6,991.2 L418.6,1005.7 L402.6,1020.3 L402.6,1008.7 L381.2,1008.7 Z" fill="#2a86d6"/>
<path d="M478.2,986 A26,26 0 1 0 491,980.6" fill="none" stroke="#757575" stroke-width="4"/>
<path d="M473.5,993.5 L475.2,981.5 L485.5,988 Z" fill="#757575"/>
<g fill="none" stroke="#6a6a6a" stroke-width="1.8"><path d="M565.5,983.5 L608,983.5 L608,1026 L570.5,1026 L565.5,1021 Z"/><rect x="572.5" y="983.5" width="29" height="19"/><rect x="575.5" y="1011" width="23" height="15"/></g>
<rect x="586.0" y="1012.0" width="11.5" height="13.5" fill="#6a6a6a" />
<path d="M669.6,970 L688.4,1000.8 L651.2,1000.8 Z" fill="#fff" stroke="#fff" stroke-width="1.6" stroke-linejoin="round"/>
<rect x="667.4" y="979.5" width="4.4" height="13.0" fill="#3a3738" />
<rect x="667.4" y="994.8" width="4.4" height="3.8" fill="#3a3738" />
<circle cx="688.2" cy="1024.4" r="15.8" fill="#1a1819" stroke="#2a6cae" stroke-width="1.5"/>
<path d="M682.4,1018.6 L694,1030.2 M694,1018.6 L682.4,1030.2" stroke="#fff" stroke-width="4" fill="none"/>
<rect x="743.5" y="990.8" width="53" height="28" rx="4" fill="#1a1819" stroke="#fff" stroke-width="3.2"/>
<rect x="749.0" y="997.0" width="4.2" height="2.6" fill="#2a78c0" />
<rect x="755.4" y="997.0" width="4.2" height="2.6" fill="#fff" />
<rect x="761.8" y="997.0" width="4.2" height="2.6" fill="#fff" />
<rect x="768.2" y="997.0" width="4.2" height="2.6" fill="#2a78c0" />
<rect x="774.6" y="997.0" width="4.2" height="2.6" fill="#fff" />
<rect x="781.0" y="997.0" width="4.2" height="2.6" fill="#fff" />
<rect x="787.4" y="997.0" width="4.2" height="2.6" fill="#2a78c0" />
<rect x="749.0" y="1003.5" width="4.2" height="2.6" fill="#fff" />
<rect x="755.4" y="1003.5" width="4.2" height="2.6" fill="#fff" />
<rect x="761.8" y="1003.5" width="4.2" height="2.6" fill="#2a78c0" />
<rect x="768.2" y="1003.5" width="4.2" height="2.6" fill="#fff" />
<rect x="774.6" y="1003.5" width="4.2" height="2.6" fill="#fff" />
<rect x="781.0" y="1003.5" width="4.2" height="2.6" fill="#2a78c0" />
<rect x="787.4" y="1003.5" width="4.2" height="2.6" fill="#fff" />
<rect x="749.0" y="1010.0" width="4.0" height="2.8" fill="#fff" />
<rect x="787.5" y="1010.0" width="4.0" height="2.8" fill="#fff" />
<rect x="756.0" y="1010.0" width="29.0" height="2.8" fill="#2a78c0" />
<rect x="832.2" y="987.2" width="57.6" height="35.4" fill="#fb0207" />
<path d="M833,988 L861,1008.5 L889,988 M833,1022 L853,1003 M889,1022 L869.5,1003" fill="none" stroke="#8a0e12" stroke-width="1.6"/>
<path d="M922.5,1022 C922.5,1010 930,1004.5 941,1004.5 C952,1004.5 958.5,1010 958.5,1021 C958.5,1029 950,1031 940.5,1031 C931,1031 922.5,1029 922.5,1022 Z" fill="#fff"/>
<circle cx="942.2" cy="993.3" r="15.2" fill="#fff" stroke="#1e1b1c" stroke-width="2"/>
<path d="M982.46,1012.03 L982.46,1017.17 L978.68,1017.46 L977.90,1019.35 L980.36,1022.23 L976.73,1025.86 L973.85,1023.40 L971.96,1024.18 L971.67,1027.96 L966.53,1027.96 L966.24,1024.18 L964.35,1023.40 L961.47,1025.86 L957.84,1022.23 L960.30,1019.35 L959.52,1017.46 L955.74,1017.17 L955.74,1012.03 L959.52,1011.74 L960.30,1009.85 L957.84,1006.97 L961.47,1003.34 L964.35,1005.80 L966.24,1005.02 L966.53,1001.24 L971.67,1001.24 L971.96,1005.02 L973.85,1005.80 L976.73,1003.34 L980.36,1006.97 L977.90,1009.85 L978.68,1011.74 Z" fill="#2a78c0" stroke="#1e1b1c" stroke-width="1.4"/>
<circle cx="969.1" cy="1014.6" r="4.8" fill="#1e1b1c"/>
<path d="M1026.1,976.0h2.8v1.42h-2.8zM1030.3,976.0h1.4v1.42h-1.4zM1033.2,976.0h2.8v1.42h-2.8zM1037.4,976.0h7.1v1.42h-7.1zM1045.9,976.0h2.8v1.42h-2.8zM1053.0,976.0h1.4v1.42h-1.4zM1055.9,976.0h1.4v1.42h-1.4zM1058.7,976.0h2.8v1.42h-2.8zM1026.1,977.4h1.4v1.42h-1.4zM1028.9,977.4h1.4v1.42h-1.4zM1033.2,977.4h1.4v1.42h-1.4zM1036.0,977.4h4.3v1.42h-4.3zM1041.7,977.4h2.8v1.42h-2.8zM1045.9,977.4h2.8v1.42h-2.8zM1051.6,977.4h1.4v1.42h-1.4zM1058.7,977.4h1.4v1.42h-1.4zM1026.1,978.8h2.8v1.42h-2.8zM1030.3,978.8h1.4v1.42h-1.4zM1033.2,978.8h1.4v1.42h-1.4zM1040.3,978.8h1.4v1.42h-1.4zM1045.9,978.8h1.4v1.42h-1.4zM1050.2,978.8h1.4v1.42h-1.4zM1053.0,978.8h1.4v1.42h-1.4zM1060.1,978.8h1.4v1.42h-1.4zM1027.5,980.3h1.4v1.42h-1.4zM1030.3,980.3h4.3v1.42h-4.3zM1036.0,980.3h4.3v1.42h-4.3zM1041.7,980.3h2.8v1.42h-2.8zM1050.2,980.3h4.3v1.42h-4.3zM1057.3,980.3h4.3v1.42h-4.3zM1026.1,981.7h1.4v1.42h-1.4zM1028.9,981.7h5.7v1.42h-5.7zM1043.1,981.7h1.4v1.42h-1.4zM1050.2,981.7h4.3v1.42h-4.3zM1055.9,981.7h5.7v1.42h-5.7zM1026.1,983.1h8.5v1.42h-8.5zM1037.4,983.1h7.1v1.42h-7.1zM1047.3,983.1h1.4v1.42h-1.4zM1050.2,983.1h5.7v1.42h-5.7zM1057.3,983.1h2.8v1.42h-2.8zM1027.5,984.5h1.4v1.42h-1.4zM1030.3,984.5h1.4v1.42h-1.4zM1037.4,984.5h4.3v1.42h-4.3zM1045.9,984.5h2.8v1.42h-2.8zM1057.3,984.5h1.4v1.42h-1.4zM1060.1,984.5h1.4v1.42h-1.4zM1026.1,985.9h4.3v1.42h-4.3zM1033.2,985.9h1.4v1.42h-1.4zM1038.8,985.9h7.1v1.42h-7.1zM1050.2,985.9h1.4v1.42h-1.4zM1054.4,985.9h1.4v1.42h-1.4zM1014.7,987.4h2.8v1.42h-2.8zM1019.0,987.4h1.4v1.42h-1.4zM1023.2,987.4h2.8v1.42h-2.8zM1028.9,987.4h4.3v1.42h-4.3zM1036.0,987.4h1.4v1.42h-1.4zM1041.7,987.4h1.4v1.42h-1.4zM1044.5,987.4h2.8v1.42h-2.8zM1053.0,987.4h1.4v1.42h-1.4zM1057.3,987.4h5.7v1.42h-5.7zM1064.4,987.4h4.3v1.42h-4.3zM1070.1,987.4h1.4v1.42h-1.4zM1017.5,988.8h1.4v1.42h-1.4zM1024.6,988.8h5.7v1.42h-5.7zM1031.7,988.8h1.4v1.42h-1.4zM1037.4,988.8h1.4v1.42h-1.4zM1043.1,988.8h1.4v1.42h-1.4zM1045.9,988.8h2.8v1.42h-2.8zM1055.9,988.8h1.4v1.42h-1.4zM1063.0,988.8h1.4v1.42h-1.4zM1065.8,988.8h1.4v1.42h-1.4zM1014.7,990.2h1.4v1.42h-1.4zM1020.4,990.2h8.5v1.42h-8.5zM1033.2,990.2h1.4v1.42h-1.4zM1037.4,990.2h1.4v1.42h-1.4zM1041.7,990.2h1.4v1.42h-1.4zM1044.5,990.2h1.4v1.42h-1.4zM1050.2,990.2h2.8v1.42h-2.8zM1054.4,990.2h4.3v1.42h-4.3zM1060.1,990.2h1.4v1.42h-1.4zM1063.0,990.2h4.3v1.42h-4.3zM1070.1,990.2h1.4v1.42h-1.4zM1017.5,991.6h4.3v1.42h-4.3zM1023.2,991.6h4.3v1.42h-4.3zM1030.3,991.6h2.8v1.42h-2.8zM1037.4,991.6h2.8v1.42h-2.8zM1041.7,991.6h2.8v1.42h-2.8zM1048.8,991.6h1.4v1.42h-1.4zM1051.6,991.6h1.4v1.42h-1.4zM1054.4,991.6h2.8v1.42h-2.8zM1060.1,991.6h2.8v1.42h-2.8zM1064.4,991.6h8.5v1.42h-8.5zM1014.7,993.0h1.4v1.42h-1.4zM1017.5,993.0h1.4v1.42h-1.4zM1020.4,993.0h7.1v1.42h-7.1zM1030.3,993.0h1.4v1.42h-1.4zM1034.6,993.0h1.4v1.42h-1.4zM1037.4,993.0h1.4v1.42h-1.4zM1041.7,993.0h1.4v1.42h-1.4zM1047.3,993.0h1.4v1.42h-1.4zM1053.0,993.0h7.1v1.42h-7.1zM1061.5,993.0h4.3v1.42h-4.3zM1070.1,993.0h2.8v1.42h-2.8zM1014.7,994.5h1.4v1.42h-1.4zM1017.5,994.5h4.3v1.42h-4.3zM1026.1,994.5h1.4v1.42h-1.4zM1028.9,994.5h5.7v1.42h-5.7zM1037.4,994.5h1.4v1.42h-1.4zM1040.3,994.5h11.4v1.42h-11.4zM1060.1,994.5h2.8v1.42h-2.8zM1064.4,994.5h1.4v1.42h-1.4zM1068.6,994.5h1.4v1.42h-1.4zM1019.0,995.9h1.4v1.42h-1.4zM1033.2,995.9h7.1v1.42h-7.1zM1047.3,995.9h2.8v1.42h-2.8zM1057.3,995.9h1.4v1.42h-1.4zM1060.1,995.9h4.3v1.42h-4.3zM1065.8,995.9h1.4v1.42h-1.4zM1070.1,995.9h2.8v1.42h-2.8zM1014.7,997.3h1.4v1.42h-1.4zM1021.8,997.3h4.3v1.42h-4.3zM1027.5,997.3h1.4v1.42h-1.4zM1030.3,997.3h4.3v1.42h-4.3zM1038.8,997.3h1.4v1.42h-1.4zM1041.7,997.3h1.4v1.42h-1.4zM1044.5,997.3h1.4v1.42h-1.4zM1047.3,997.3h1.4v1.42h-1.4zM1051.6,997.3h1.4v1.42h-1.4zM1057.3,997.3h4.3v1.42h-4.3zM1063.0,997.3h1.4v1.42h-1.4zM1065.8,997.3h1.4v1.42h-1.4zM1070.1,997.3h1.4v1.42h-1.4zM1019.0,998.7h1.4v1.42h-1.4zM1021.8,998.7h4.3v1.42h-4.3zM1027.5,998.7h7.1v1.42h-7.1zM1036.0,998.7h1.4v1.42h-1.4zM1040.3,998.7h1.4v1.42h-1.4zM1045.9,998.7h4.3v1.42h-4.3zM1053.0,998.7h7.1v1.42h-7.1zM1061.5,998.7h1.4v1.42h-1.4zM1064.4,998.7h2.8v1.42h-2.8zM1068.6,998.7h2.8v1.42h-2.8zM1024.6,1000.1h1.4v1.42h-1.4zM1027.5,1000.1h1.4v1.42h-1.4zM1031.7,1000.1h2.8v1.42h-2.8zM1036.0,1000.1h1.4v1.42h-1.4zM1038.8,1000.1h2.8v1.42h-2.8zM1044.5,1000.1h1.4v1.42h-1.4zM1047.3,1000.1h1.4v1.42h-1.4zM1050.2,1000.1h5.7v1.42h-5.7zM1057.3,1000.1h2.8v1.42h-2.8zM1063.0,1000.1h9.9v1.42h-9.9zM1014.7,1001.6h1.4v1.42h-1.4zM1020.4,1001.6h2.8v1.42h-2.8zM1024.6,1001.6h5.7v1.42h-5.7zM1031.7,1001.6h1.4v1.42h-1.4zM1037.4,1001.6h7.1v1.42h-7.1zM1048.8,1001.6h2.8v1.42h-2.8zM1054.4,1001.6h1.4v1.42h-1.4zM1057.3,1001.6h2.8v1.42h-2.8zM1065.8,1001.6h4.3v1.42h-4.3zM1020.4,1003.0h1.4v1.42h-1.4zM1023.2,1003.0h1.4v1.42h-1.4zM1026.1,1003.0h1.4v1.42h-1.4zM1030.3,1003.0h4.3v1.42h-4.3zM1037.4,1003.0h2.8v1.42h-2.8zM1043.1,1003.0h2.8v1.42h-2.8zM1047.3,1003.0h2.8v1.42h-2.8zM1055.9,1003.0h4.3v1.42h-4.3zM1063.0,1003.0h2.8v1.42h-2.8zM1068.6,1003.0h2.8v1.42h-2.8zM1016.1,1004.4h5.7v1.42h-5.7zM1023.2,1004.4h1.4v1.42h-1.4zM1028.9,1004.4h1.4v1.42h-1.4zM1031.7,1004.4h1.4v1.42h-1.4zM1034.6,1004.4h2.8v1.42h-2.8zM1038.8,1004.4h1.4v1.42h-1.4zM1041.7,1004.4h5.7v1.42h-5.7zM1050.2,1004.4h4.3v1.42h-4.3zM1055.9,1004.4h5.7v1.42h-5.7zM1068.6,1004.4h2.8v1.42h-2.8zM1016.1,1005.8h1.4v1.42h-1.4zM1019.0,1005.8h9.9v1.42h-9.9zM1030.3,1005.8h1.4v1.42h-1.4zM1033.2,1005.8h2.8v1.42h-2.8zM1038.8,1005.8h2.8v1.42h-2.8zM1043.1,1005.8h1.4v1.42h-1.4zM1045.9,1005.8h2.8v1.42h-2.8zM1050.2,1005.8h2.8v1.42h-2.8zM1055.9,1005.8h4.3v1.42h-4.3zM1061.5,1005.8h1.4v1.42h-1.4zM1065.8,1005.8h2.8v1.42h-2.8zM1071.5,1005.8h1.4v1.42h-1.4zM1016.1,1007.2h4.3v1.42h-4.3zM1026.1,1007.2h2.8v1.42h-2.8zM1033.2,1007.2h4.3v1.42h-4.3zM1040.3,1007.2h1.4v1.42h-1.4zM1048.8,1007.2h4.3v1.42h-4.3zM1054.4,1007.2h2.8v1.42h-2.8zM1058.7,1007.2h4.3v1.42h-4.3zM1064.4,1007.2h1.4v1.42h-1.4zM1070.1,1007.2h2.8v1.42h-2.8zM1014.7,1008.6h1.4v1.42h-1.4zM1019.0,1008.6h4.3v1.42h-4.3zM1030.3,1008.6h1.4v1.42h-1.4zM1033.2,1008.6h1.4v1.42h-1.4zM1036.0,1008.6h1.4v1.42h-1.4zM1038.8,1008.6h5.7v1.42h-5.7zM1047.3,1008.6h2.8v1.42h-2.8zM1053.0,1008.6h1.4v1.42h-1.4zM1058.7,1008.6h1.4v1.42h-1.4zM1065.8,1008.6h5.7v1.42h-5.7zM1017.5,1010.1h1.4v1.42h-1.4zM1020.4,1010.1h2.8v1.42h-2.8zM1026.1,1010.1h1.4v1.42h-1.4zM1030.3,1010.1h7.1v1.42h-7.1zM1040.3,1010.1h4.3v1.42h-4.3zM1045.9,1010.1h4.3v1.42h-4.3zM1053.0,1010.1h4.3v1.42h-4.3zM1060.1,1010.1h2.8v1.42h-2.8zM1064.4,1010.1h4.3v1.42h-4.3zM1070.1,1010.1h1.4v1.42h-1.4zM1014.7,1011.5h2.8v1.42h-2.8zM1020.4,1011.5h2.8v1.42h-2.8zM1024.6,1011.5h2.8v1.42h-2.8zM1028.9,1011.5h1.4v1.42h-1.4zM1031.7,1011.5h1.4v1.42h-1.4zM1034.6,1011.5h4.3v1.42h-4.3zM1043.1,1011.5h1.4v1.42h-1.4zM1045.9,1011.5h1.4v1.42h-1.4zM1048.8,1011.5h2.8v1.42h-2.8zM1054.4,1011.5h1.4v1.42h-1.4zM1060.1,1011.5h2.8v1.42h-2.8zM1065.8,1011.5h2.8v1.42h-2.8zM1070.1,1011.5h1.4v1.42h-1.4zM1017.5,1012.9h1.4v1.42h-1.4zM1020.4,1012.9h2.8v1.42h-2.8zM1026.1,1012.9h4.3v1.42h-4.3zM1031.7,1012.9h4.3v1.42h-4.3zM1038.8,1012.9h1.4v1.42h-1.4zM1043.1,1012.9h1.4v1.42h-1.4zM1045.9,1012.9h1.4v1.42h-1.4zM1051.6,1012.9h2.8v1.42h-2.8zM1055.9,1012.9h1.4v1.42h-1.4zM1058.7,1012.9h4.3v1.42h-4.3zM1064.4,1012.9h2.8v1.42h-2.8zM1070.1,1012.9h2.8v1.42h-2.8zM1014.7,1014.3h8.5v1.42h-8.5zM1024.6,1014.3h1.4v1.42h-1.4zM1027.5,1014.3h1.4v1.42h-1.4zM1033.2,1014.3h1.4v1.42h-1.4zM1036.0,1014.3h1.4v1.42h-1.4zM1038.8,1014.3h1.4v1.42h-1.4zM1045.9,1014.3h1.4v1.42h-1.4zM1048.8,1014.3h1.4v1.42h-1.4zM1053.0,1014.3h1.4v1.42h-1.4zM1057.3,1014.3h2.8v1.42h-2.8zM1061.5,1014.3h1.4v1.42h-1.4zM1064.4,1014.3h1.4v1.42h-1.4zM1067.2,1014.3h1.4v1.42h-1.4zM1071.5,1014.3h1.4v1.42h-1.4zM1014.7,1015.7h1.4v1.42h-1.4zM1017.5,1015.7h5.7v1.42h-5.7zM1027.5,1015.7h1.4v1.42h-1.4zM1030.3,1015.7h1.4v1.42h-1.4zM1034.6,1015.7h1.4v1.42h-1.4zM1041.7,1015.7h1.4v1.42h-1.4zM1045.9,1015.7h1.4v1.42h-1.4zM1048.8,1015.7h1.4v1.42h-1.4zM1053.0,1015.7h1.4v1.42h-1.4zM1055.9,1015.7h2.8v1.42h-2.8zM1060.1,1015.7h1.4v1.42h-1.4zM1063.0,1015.7h1.4v1.42h-1.4zM1070.1,1015.7h2.8v1.42h-2.8zM1014.7,1017.2h2.8v1.42h-2.8zM1019.0,1017.2h1.4v1.42h-1.4zM1023.2,1017.2h2.8v1.42h-2.8zM1027.5,1017.2h8.5v1.42h-8.5zM1038.8,1017.2h1.4v1.42h-1.4zM1041.7,1017.2h2.8v1.42h-2.8zM1045.9,1017.2h4.3v1.42h-4.3zM1054.4,1017.2h4.3v1.42h-4.3zM1061.5,1017.2h1.4v1.42h-1.4zM1064.4,1017.2h1.4v1.42h-1.4zM1068.6,1017.2h1.4v1.42h-1.4zM1071.5,1017.2h1.4v1.42h-1.4zM1016.1,1018.6h4.3v1.42h-4.3zM1021.8,1018.6h1.4v1.42h-1.4zM1026.1,1018.6h2.8v1.42h-2.8zM1034.6,1018.6h5.7v1.42h-5.7zM1044.5,1018.6h1.4v1.42h-1.4zM1048.8,1018.6h1.4v1.42h-1.4zM1051.6,1018.6h8.5v1.42h-8.5zM1065.8,1018.6h1.4v1.42h-1.4zM1068.6,1018.6h1.4v1.42h-1.4zM1014.7,1020.0h1.4v1.42h-1.4zM1019.0,1020.0h1.4v1.42h-1.4zM1021.8,1020.0h4.3v1.42h-4.3zM1030.3,1020.0h1.4v1.42h-1.4zM1033.2,1020.0h2.8v1.42h-2.8zM1043.1,1020.0h1.4v1.42h-1.4zM1048.8,1020.0h1.4v1.42h-1.4zM1053.0,1020.0h2.8v1.42h-2.8zM1057.3,1020.0h1.4v1.42h-1.4zM1060.1,1020.0h4.3v1.42h-4.3zM1065.8,1020.0h5.7v1.42h-5.7zM1019.0,1021.4h1.4v1.42h-1.4zM1021.8,1021.4h1.4v1.42h-1.4zM1027.5,1021.4h1.4v1.42h-1.4zM1033.2,1021.4h5.7v1.42h-5.7zM1045.9,1021.4h4.3v1.42h-4.3zM1051.6,1021.4h8.5v1.42h-8.5zM1061.5,1021.4h2.8v1.42h-2.8zM1070.1,1021.4h2.8v1.42h-2.8zM1026.1,1022.8h1.4v1.42h-1.4zM1028.9,1022.8h1.4v1.42h-1.4zM1033.2,1022.8h1.4v1.42h-1.4zM1036.0,1022.8h1.4v1.42h-1.4zM1038.8,1022.8h4.3v1.42h-4.3zM1045.9,1022.8h1.4v1.42h-1.4zM1048.8,1022.8h1.4v1.42h-1.4zM1051.6,1022.8h1.4v1.42h-1.4zM1054.4,1022.8h1.4v1.42h-1.4zM1057.3,1022.8h1.4v1.42h-1.4zM1060.1,1022.8h2.8v1.42h-2.8zM1064.4,1022.8h2.8v1.42h-2.8zM1068.6,1022.8h1.4v1.42h-1.4zM1028.9,1024.3h4.3v1.42h-4.3zM1034.6,1024.3h1.4v1.42h-1.4zM1037.4,1024.3h4.3v1.42h-4.3zM1044.5,1024.3h1.4v1.42h-1.4zM1047.3,1024.3h1.4v1.42h-1.4zM1055.9,1024.3h4.3v1.42h-4.3zM1064.4,1024.3h2.8v1.42h-2.8zM1070.1,1024.3h1.4v1.42h-1.4zM1027.5,1025.7h4.3v1.42h-4.3zM1034.6,1025.7h5.7v1.42h-5.7zM1041.7,1025.7h4.3v1.42h-4.3zM1048.8,1025.7h1.4v1.42h-1.4zM1051.6,1025.7h2.8v1.42h-2.8zM1058.7,1025.7h2.8v1.42h-2.8zM1063.0,1025.7h7.1v1.42h-7.1zM1028.9,1027.1h2.8v1.42h-2.8zM1033.2,1027.1h1.4v1.42h-1.4zM1037.4,1027.1h1.4v1.42h-1.4zM1041.7,1027.1h2.8v1.42h-2.8zM1054.4,1027.1h2.8v1.42h-2.8zM1058.7,1027.1h2.8v1.42h-2.8zM1065.8,1027.1h2.8v1.42h-2.8zM1071.5,1027.1h1.4v1.42h-1.4zM1028.9,1028.5h1.4v1.42h-1.4zM1033.2,1028.5h1.4v1.42h-1.4zM1037.4,1028.5h1.4v1.42h-1.4zM1040.3,1028.5h1.4v1.42h-1.4zM1045.9,1028.5h1.4v1.42h-1.4zM1057.3,1028.5h1.4v1.42h-1.4zM1060.1,1028.5h1.4v1.42h-1.4zM1063.0,1028.5h1.4v1.42h-1.4zM1065.8,1028.5h1.4v1.42h-1.4zM1068.6,1028.5h4.3v1.42h-4.3zM1026.1,1029.9h5.7v1.42h-5.7zM1033.2,1029.9h4.3v1.42h-4.3zM1041.7,1029.9h1.4v1.42h-1.4zM1044.5,1029.9h4.3v1.42h-4.3zM1053.0,1029.9h1.4v1.42h-1.4zM1055.9,1029.9h1.4v1.42h-1.4zM1058.7,1029.9h1.4v1.42h-1.4zM1064.4,1029.9h2.8v1.42h-2.8zM1068.6,1029.9h1.4v1.42h-1.4zM1071.5,1029.9h1.4v1.42h-1.4zM1027.5,1031.4h8.5v1.42h-8.5zM1037.4,1031.4h4.3v1.42h-4.3zM1043.1,1031.4h1.4v1.42h-1.4zM1047.3,1031.4h1.4v1.42h-1.4zM1051.6,1031.4h1.4v1.42h-1.4zM1057.3,1031.4h1.4v1.42h-1.4zM1061.5,1031.4h2.8v1.42h-2.8zM1067.2,1031.4h5.7v1.42h-5.7zM1027.5,1032.8h2.8v1.42h-2.8zM1033.2,1032.8h1.4v1.42h-1.4zM1044.5,1032.8h1.4v1.42h-1.4zM1050.2,1032.8h1.4v1.42h-1.4zM1054.4,1032.8h4.3v1.42h-4.3zM1060.1,1032.8h1.4v1.42h-1.4zM1063.0,1032.8h1.4v1.42h-1.4zM1065.8,1032.8h1.4v1.42h-1.4zM1070.1,1032.8h1.4v1.42h-1.4z" fill="#fff"/>
<rect x="1014.7" y="976.0" width="9.9" height="9.9" fill="#fff" />
<rect x="1016.1" y="977.4" width="7.1" height="7.1" fill="#1e1b1c" />
<rect x="1017.5" y="978.8" width="4.3" height="4.3" fill="#fff" />
<rect x="1063.0" y="976.0" width="9.9" height="9.9" fill="#fff" />
<rect x="1064.4" y="977.4" width="7.1" height="7.1" fill="#1e1b1c" />
<rect x="1065.8" y="978.8" width="4.3" height="4.3" fill="#fff" />
<rect x="1014.7" y="1024.3" width="9.9" height="9.9" fill="#fff" />
<rect x="1016.1" y="1025.7" width="7.1" height="7.1" fill="#1e1b1c" />
<rect x="1017.5" y="1027.1" width="4.3" height="4.3" fill="#fff" />
<text x="1031.0" y="1009.0" font-size="11.73" textLength="26.0" lengthAdjust="spacingAndGlyphs" fill="#24609c" font-weight="bold" >HCS</text>
<rect x="-20.0" y="1053.0" width="1484.0" height="46.0" fill="#1e7ac8" />
<rect x="-20.0" y="1053.0" width="1484.0" height="8.0" fill="url(#sbg)" />
<text x="9.5" y="1070.0" font-size="16.76" textLength="6.0" lengthAdjust="spacingAndGlyphs" fill="#eef6ff" font-weight="bold" >-</text>
<text x="23.0" y="1070.0" font-size="16.76" textLength="42.5" lengthAdjust="spacingAndGlyphs" fill="#eef6ff" font-weight="bold" >Scan</text>
<text x="73.8" y="1070.0" font-size="16.76" textLength="8.2" lengthAdjust="spacingAndGlyphs" fill="#eef6ff" font-weight="bold" >=</text>
<text x="89.5" y="1070.0" font-size="16.76" textLength="35.0" lengthAdjust="spacingAndGlyphs" fill="#eef6ff" font-weight="bold" >000</text>
<text x="132.0" y="1070.0" font-size="16.76" textLength="3.2" lengthAdjust="spacingAndGlyphs" fill="#eef6ff" font-weight="bold" >:</text>
<text x="142.0" y="1070.0" font-size="16.76" textLength="36.8" lengthAdjust="spacingAndGlyphs" fill="#eef6ff" font-weight="bold" >Max</text>
<text x="187.5" y="1070.0" font-size="16.76" textLength="8.3" lengthAdjust="spacingAndGlyphs" fill="#eef6ff" font-weight="bold" >=</text>
<text x="203.0" y="1070.0" font-size="16.76" textLength="34.0" lengthAdjust="spacingAndGlyphs" fill="#eef6ff" font-weight="bold" >282</text>
<text x="244.5" y="1070.0" font-size="16.76" textLength="3.2" lengthAdjust="spacingAndGlyphs" fill="#eef6ff" font-weight="bold" >:</text>
<text x="255.0" y="1070.0" font-size="16.76" textLength="30.0" lengthAdjust="spacingAndGlyphs" fill="#eef6ff" font-weight="bold" >Min</text>
<text x="294.3" y="1070.0" font-size="16.76" textLength="8.2" lengthAdjust="spacingAndGlyphs" fill="#eef6ff" font-weight="bold" >=</text>
<text x="310.0" y="1070.0" font-size="16.76" textLength="33.8" lengthAdjust="spacingAndGlyphs" fill="#eef6ff" font-weight="bold" >000</text>
<text x="356.6" y="1070.0" font-size="16.76" textLength="3.4" lengthAdjust="spacingAndGlyphs" fill="#eef6ff" font-weight="bold" >|</text>
<text x="372.5" y="1070.0" font-size="16.76" textLength="164.0" lengthAdjust="spacingAndGlyphs" fill="#eef6ff" font-weight="bold" >Plant Status: Error</text>
<text x="548.0" y="1070.0" font-size="16.76" textLength="3.4" lengthAdjust="spacingAndGlyphs" fill="#eef6ff" font-weight="bold" >|</text>
<text x="564.6" y="1070.0" font-size="16.76" textLength="164.0" lengthAdjust="spacingAndGlyphs" fill="#eef6ff" font-weight="bold" >Server Comms: OK</text>
<text x="742.0" y="1070.0" font-size="16.76" textLength="3.4" lengthAdjust="spacingAndGlyphs" fill="#eef6ff" font-weight="bold" >|</text>
<text x="757.7" y="1070.0" font-size="16.76" textLength="137.9" lengthAdjust="spacingAndGlyphs" fill="#eef6ff" font-weight="bold" >DB Process: OK</text>
<text x="908.4" y="1070.0" font-size="16.76" textLength="3.4" lengthAdjust="spacingAndGlyphs" fill="#eef6ff" font-weight="bold" >|</text>
<text x="924.2" y="1070.0" font-size="16.76" textLength="136.8" lengthAdjust="spacingAndGlyphs" fill="#eef6ff" font-weight="bold" >DB Connection:</text>
<text x="1072.0" y="1070.0" font-size="16.76" textLength="365.0" lengthAdjust="spacingAndGlyphs" fill="#eef6ff" font-weight="bold" >(POWERED BY H CONTROL SOLUTIONS</text>
<rect x="-20.0" y="-20.0" width="24.2" height="1119.0" fill="#1e7ac8" />
<rect x="-20.0" y="-20.0" width="20.8" height="1119.0" fill="#0c2240" />
<rect x="1439.8" y="-20.0" width="24.2" height="1119.0" fill="#1e7ac8" />
<path d="M-1,-1 L7,-1 Q0,0 -1,7 Z" fill="#0a0e16"/>
<path d="M1445,-1 L1437,-1 Q1444,0 1445,7 Z" fill="#0a0e16"/>
<path d="M-1,1080 L8,1080 Q1,1079 -1,1071 Z" fill="#0a0e16"/>
<path d="M1445,1080 L1436,1080 Q1443,1079 1445,1071 Z" fill="#0a0e16"/>
<path d="M1412.2,936.2 L1464,936.2 L1464,1019 L1409.5,990 L1407.6,987.5 L1407.6,940 Z" fill="#5c5a5c" stroke="#454345" stroke-width="1.2"/>
<rect x="1416.0" y="947.3" width="22.0" height="21.7" fill="#0b0b1e" rx="3" ry="3" />
<circle cx="1427" cy="958.2" r="8.6" fill="#8c8ca2"/>
<path d="M1420.5,958.2 L1424.5,955 L1424.5,957.2 L1429.5,957.2 L1429.5,955 L1433.5,958.2 L1429.5,961.4 L1429.5,959.2 L1424.5,959.2 L1424.5,961.4 Z" fill="#0b0b1e"/>
</g>
</svg>
</body></html>
